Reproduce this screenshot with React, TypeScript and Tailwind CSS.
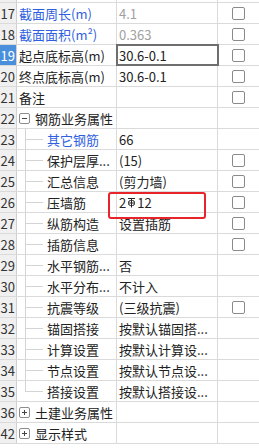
import * as React from "react";

type Row = {
  no: string;
  name: string;
  value?: React.ReactNode;
  check?: boolean;
  nameTone?: "blue" | "plain";
  valueTone?: "gray" | "plain";
  kind?: "leaf" | "child" | "open" | "closed";
  active?: boolean;
};

function Rebar() {
  return (
    <svg width="9" height="11" viewBox="0 0 9 11" className="inline-block mx-[1px] -mt-[2px]" fill="none" stroke="#222" strokeWidth="1">
      <path d="M1 1.5H8" />
      <path d="M4.5 1.5V10.5" />
      <rect x="1.5" y="3.5" width="6" height="5" rx="2" />
      <path d="M1.5 6H7.5" />
    </svg>
  );
}

// first row is only the bottom edge of the row above, scrolled out of view
const rows: Row[] = [
  { no: "", name: "", value: "", check: true },
  { no: "17", name: "截面周长(m)", value: "4.1", check: true, nameTone: "blue", valueTone: "gray" },
  { no: "18", name: "截面面积(m²)", value: "0.363", check: true, nameTone: "blue", valueTone: "gray" },
  { no: "19", name: "起点底标高(m)", value: "30.6-0.1", check: true, active: true },
  { no: "20", name: "终点底标高(m)", value: "30.6-0.1", check: true },
  { no: "21", name: "备注", value: "", check: true },
  { no: "22", name: "钢筋业务属性", kind: "open" },
  { no: "23", name: "其它钢筋", value: "66", kind: "child", nameTone: "blue" },
  { no: "24", name: "保护层厚...", value: "(15)", check: true, kind: "child" },
  { no: "25", name: "汇总信息", value: "(剪力墙)", check: true, kind: "child" },
  { no: "26", name: "压墙筋", value: (<span>2<Rebar />12</span>), check: true, kind: "child" },
  { no: "27", name: "纵筋构造", value: "设置插筋", check: true, kind: "child" },
  { no: "28", name: "插筋信息", value: "", check: true, kind: "child" },
  { no: "29", name: "水平钢筋...", value: "否", kind: "child" },
  { no: "30", name: "水平分布...", value: "不计入", kind: "child" },
  { no: "31", name: "抗震等级", value: "(三级抗震)", check: true, kind: "child" },
  { no: "32", name: "锚固搭接", value: "按默认锚固搭...", kind: "child" },
  { no: "33", name: "计算设置", value: "按默认计算设...", kind: "child" },
  { no: "34", name: "节点设置", value: "按默认节点设...", kind: "child" },
  { no: "35", name: "搭接设置", value: "按默认搭接设...", kind: "child" },
  { no: "36", name: "土建业务属性", kind: "closed" },
  { no: "42", name: "显示样式", kind: "closed" },
];

function Box({ sign }: { sign: "-" | "+" }) {
  return (
    <span className="relative inline-block w-[11px] h-[11px] border border-[#8c8c8c] rounded-[2px] bg-white shrink-0">
      <span className="absolute left-[2px] top-[4px] w-[5px] h-px bg-[#444]" />
      {sign === "+" && <span className="absolute left-[4px] top-[2px] w-px h-[5px] bg-[#444]" />}
    </span>
  );
}

function NameCell({ row, first, last }: { row: Row; first: boolean; last: boolean }) {
  const color = row.nameTone === "blue" ? "text-[#2f5fe0]" : "text-[#222]";
  if (row.kind === "open" || row.kind === "closed") {
    return (
      <div className="flex items-center gap-[5px] pl-[2px] h-full">
        <Box sign={row.kind === "open" ? "-" : "+"} />
        <span className="text-[#222] whitespace-nowrap">{row.name}</span>
      </div>
    );
  }
  if (row.kind === "child") {
    return (
      <div className="relative flex items-center h-full pl-[30px]">
        <span
          className={
            "absolute left-[8px] w-px bg-[#d4d4d4] " +
            (first ? "top-0 " : "-top-px ") +
            (last ? "h-[11px]" : "bottom-[-1px]")
          }
        />
        <span className="absolute left-[8px] top-[10px] w-[18px] h-px bg-[#d4d4d4]" />
        <span className={"whitespace-nowrap " + color}>{row.name}</span>
      </div>
    );
  }
  return (
    <div className="flex items-center h-full pl-[2px]">
      <span className={"whitespace-nowrap " + color}>{row.name}</span>
    </div>
  );
}

export default function App() {
  return (
    <div
      className="relative w-[259px] h-[448px] overflow-hidden bg-white text-[13px] leading-none"
      style={{ fontFamily: '"Noto Sans CJK SC", "Microsoft YaHei", sans-serif' }}
    >
      <div className="-mt-[18px]">
        {rows.map((row, i) => {
          const first = row.kind === "child" && rows[i - 1]?.kind !== "child";
          const last = row.kind === "child" && rows[i + 1]?.kind !== "child";
          return (
            <div key={i} className="flex h-[21px] border-b border-[#dadada]">
              <div
                className={
                  "w-[17px] shrink-0 flex items-center justify-end overflow-hidden border-r border-[#d0d0d0] pr-[1px] " +
                  (row.active ? "bg-[#4a8fdc] text-white" : "bg-[#f0f0f0] text-[#333]")
                }
              >
                <span className="whitespace-nowrap">{row.no}</span>
              </div>
              <div className="w-[100px] shrink-0 overflow-hidden border-r border-[#dadada]">
                <NameCell row={row} first={first} last={last} />
              </div>
              <div
                className={
                  "w-[101px] shrink-0 flex items-center overflow-hidden border-r border-[#dadada] pl-[2px] " +
                  (row.active ? "outline-2 -outline-offset-1 outline-[#6e6e6e]" : "")
                }
              >
                <span className={"whitespace-nowrap " + (row.valueTone === "gray" ? "text-[#a0a0a0]" : "text-[#222]")}>
                  {row.value}
                </span>
              </div>
              <div className="flex-1 flex items-center pl-[14px]">
                {row.check && (
                  <span className="w-[13px] h-[13px] border border-[#8a8a8a] rounded-[2px] bg-white" />
                )}
              </div>
            </div>
          );
        })}
      </div>
      <div className="absolute left-[108px] top-[192px] w-[98px] h-[27px] border-2 border-[#e8242b] rounded-[3px]" />
    </div>
  );
}
